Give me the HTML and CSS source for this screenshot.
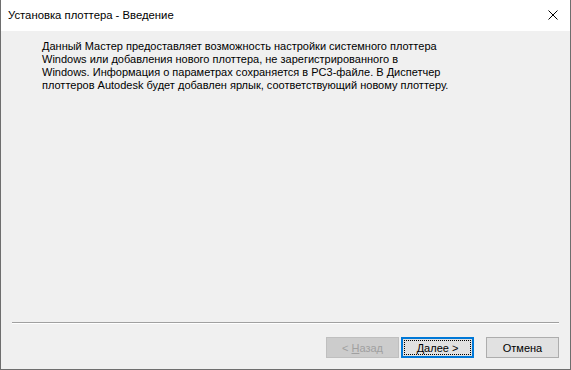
FILE: index.html
```html
<!DOCTYPE html>
<html lang="ru">
<head>
  <meta charset="UTF-8">
  <title>Установка плоттера - Введение</title>
  <link rel="stylesheet" href="styles.css">
</head>
<body>
  <div class="dialog">
    <div class="title-bar">
      <span class="title">Установка плоттера - Введение</span>
      <span class="close">
        <svg width="10" height="10" viewBox="0 0 10 10">
          <path d="M0.5 0.5 L9.5 9.5 M9.5 0.5 L0.5 9.5" stroke="#000" stroke-width="1" fill="none"/>
        </svg>
      </span>
    </div>

    <div class="content">
      <p class="intro">
        Данный Мастер предоставляет возможность настройки системного плоттера<br>
        Windows или добавления нового плоттера, не зарегистрированного в<br>
        Windows. Информация о параметрах сохраняется в PC3-файле. В Диспетчер<br>
        плоттеров Autodesk будет добавлен ярлык, соответствующий новому плоттеру.
      </p>
    </div>

    <div class="footer">
      <div class="separator"></div>
      <div class="buttons">
        <button class="btn btn-disabled" disabled>&lt; <u>Н</u>азад</button>
        <button class="btn btn-default"><span class="focus"><u>Д</u>алее &gt;</span></button>
        <button class="btn btn-cancel">Отмена</button>
      </div>
    </div>
  </div>
</body>
</html>
```

FILE: styles.css
```css
html, body {
  margin: 0;
  padding: 0;
}

body {
  width: 571px;
  height: 370px;
  font-family: "Liberation Sans", Arial, sans-serif;
  font-size: 11px;
  color: #000;
}

.dialog {
  box-sizing: border-box;
  width: 571px;
  height: 370px;
  border: 1px solid #6e6e6e;
  border-top: none;
  background: #f0f0f0;
  display: flex;
  flex-direction: column;
}

.title-bar {
  height: 31px;
  background: #fff;
  display: flex;
  align-items: center;
  justify-content: space-between;
  padding: 0 12px 0 7px;
}

.title {
  font-size: 11.3px;
  padding-bottom: 1px;
}

.close {
  display: flex;
  width: 10px;
  height: 10px;
  margin-bottom: 1px;
}

.content {
  flex: 1;
  padding: 9px 0 0 41px;
}

.intro {
  margin: 0;
  line-height: 13px;
}

.footer {
  padding: 0 11px 11px 11px;
}

.separator {
  height: 1px;
  background: #a0a0a0;
  border-bottom: 1px solid #fff;
}

.buttons {
  display: flex;
  justify-content: flex-end;
  margin-top: 13px;
}

.btn {
  box-sizing: border-box;
  width: 73px;
  height: 21px;
  font-family: "Liberation Sans", Arial, sans-serif;
  font-size: 11px;
  background: #e1e1e1;
  border: 1px solid #adadad;
  padding: 0;
  color: #000;
}

.btn-disabled {
  background: #cccccc;
  border-color: #bfbfbf;
  color: #a0a0a0;
}

.btn-default {
  margin-left: 2px;
  border: 2px solid #0078d7;
  padding: 1px;
}

.btn-default .focus {
  display: flex;
  align-items: center;
  justify-content: center;
  height: 100%;
  box-sizing: border-box;
  border: 1px dotted #000;
}

.btn-cancel {
  margin-left: 12px;
}
```
